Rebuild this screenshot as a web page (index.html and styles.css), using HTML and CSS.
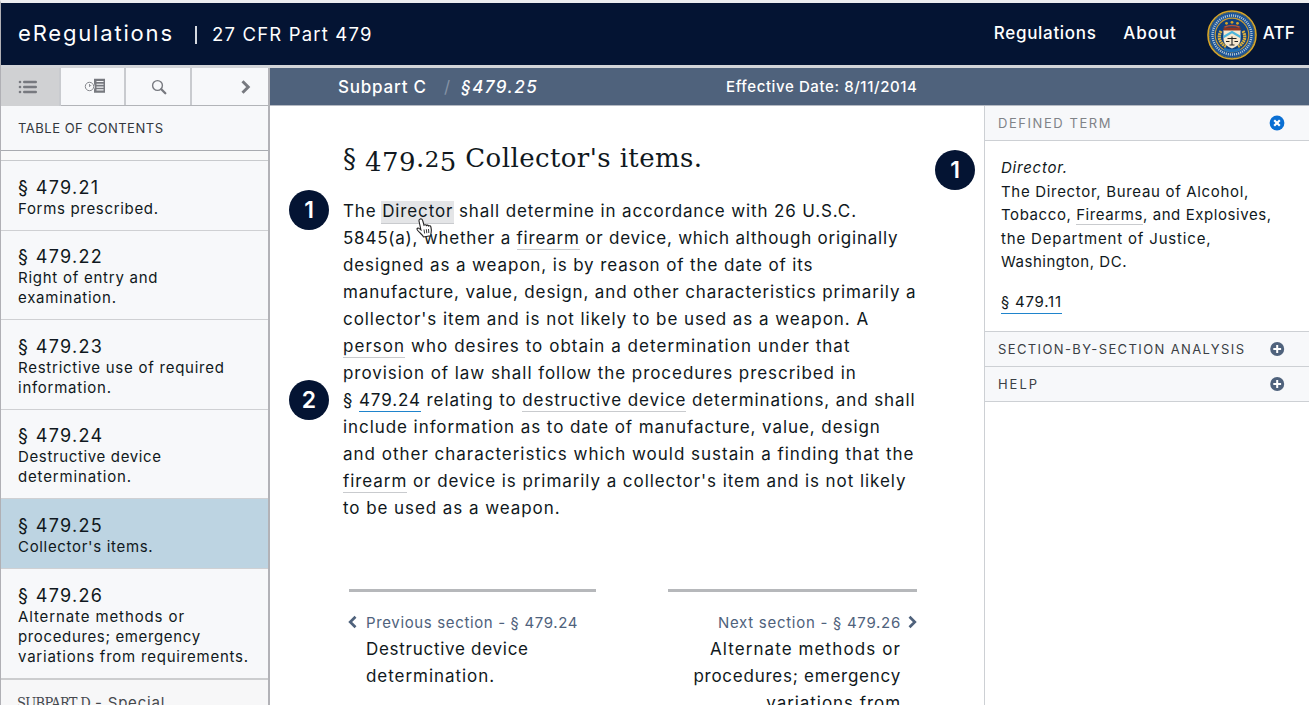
FILE: index.html
```html
<!DOCTYPE html>
<html lang="en">
<head>
<meta charset="utf-8">
<title>eRegulations | 27 CFR Part 479</title>
<link rel="stylesheet" href="styles.css">
</head>
<body>
<div class="page">
  <header class="site-header">
    <span class="brand">eRegulations</span>
    <span class="divider"></span>
    <span class="part">27 CFR Part 479</span>
    <nav class="site-nav">
      <a class="nav-regs">Regulations</a>
      <a class="nav-about">About</a>
      <svg class="seal" width="50" height="50" viewBox="0 0 50 50">
        <defs><path id="ring" d="M7.2 35 A20.4 20.4 0 1 1 42.8 35"/></defs>
        <circle cx="25" cy="25" r="24" fill="#16529a" stroke="#d8a526" stroke-width="1.6"/>
        <circle cx="25" cy="25" r="22.6" fill="none" stroke="#8b7432" stroke-width="1" stroke-dasharray="1 .8"/>
        <circle cx="25" cy="25" r="19.5" fill="none" stroke="#b3c4d0" stroke-width="2.4" stroke-dasharray="1.1 1"/>
        <circle cx="25" cy="25" r="16.8" fill="#11407c" stroke="#c79a35" stroke-width="1.2"/>
        <path d="M14 21c-3.500 6-1.500 12 5 15.500M36 21c3.500 6 1.500 12-5 15.500" fill="none" stroke="#e0b13c" stroke-width="3.200" stroke-dasharray="1.800 .6"/>
        <path d="M17 39q8 3.500 16 0" fill="none" stroke="#1e6fb8" stroke-width="3"/>
        <path d="M16.500 20h17v9c0 5-4 7.500-8.500 9.500-4.500-2-8.500-4.500-8.500-9.500z" fill="#f7e8cf"/>
        <path d="M16.500 17.500h17v3h-17z" fill="#8d3421"/>
        <path d="M17.500 17q7.500-3 15 0" fill="none" stroke="#b85232" stroke-width="1.500"/>
        <path d="M16.500 27l8.500-5 8.500 5" fill="none" stroke="#4cb5dc" stroke-width="2.200"/>
        <path d="M25 26.500v8.500M20.500 28.500h9M22.500 35h5M19 31.500h3.500M27.500 31.500h3.500" fill="none" stroke="#222" stroke-width="1.100"/>
        <g fill="#d8a526"><circle cx="19.500" cy="13.300" r="1.400"/><circle cx="25" cy="12.300" r="1.400"/><circle cx="30.500" cy="13.300" r="1.400"/></g>
      </svg>
      <a class="nav-atf">ATF</a>
    </nav>
  </header>

  <div class="toolbar">
    <div class="tabs">
      <div class="tab tab-toc"><svg width="20" height="16" viewBox="0 0 20 16"><g fill="#77797f"><circle cx="2" cy="3" r="1.300"/><circle cx="2" cy="8" r="1.300"/><circle cx="2" cy="13" r="1.300"/><rect x="5" y="1.700" width="14" height="2.600" rx="1.200"/><rect x="5" y="6.700" width="14" height="2.600" rx="1.200"/><rect x="5" y="11.700" width="14" height="2.600" rx="1.200"/></g></svg></div>
      <div class="tab tab-history"><svg width="22" height="16" viewBox="0 0 22 16"><circle cx="5.500" cy="8.500" r="4.200" fill="none" stroke="#85878c"/><path d="M5.500 6v2.700L7.200 7" fill="none" stroke="#85878c" stroke-width=".9"/><path d="M10 .8h11v14H10v-3.300q1.500-3 0-6z" fill="#77797f"/><path d="M12.500 3.500h7M12.500 6.300h7M12.500 9.100h7M12.500 11.900h7" stroke="#f4f5f7" stroke-width="1.100"/></svg></div>
      <div class="tab tab-search"><svg width="16" height="16" viewBox="0 0 16 16" fill="none" stroke="#77797f"><circle cx="6.500" cy="6.500" r="4.900" stroke-width="1.400"/><path d="M10.300 10.300l4 4" stroke-width="2.300" stroke-linecap="round"/></svg></div>
      <div class="tab tab-close"><svg width="12" height="16" viewBox="0 0 12 16" fill="none" stroke="#77797f" stroke-width="3"><path d="M2.500 2.300L8.200 8l-5.700 5.700"/></svg></div>
    </div>
    <div class="crumbs">
      <span class="crumb-part">Subpart C</span><span class="slash">/</span><em class="crumb-sec">§479.25</em>
      <span class="effective">Effective Date: 8/11/2014</span>
    </div>
  </div>

  <div class="columns">
    <aside class="toc">
      <h2 class="toc-title">TABLE OF CONTENTS</h2>
      <div class="toc-strip"></div>
      <ul class="toc-list">
        <li><b>§ 479.21</b><span class="s68">Forms prescribed.</span></li>
        <li><b>§ 479.22</b><span class="s75">Right of entry and<br>examination.</span></li>
        <li><b>§ 479.23</b><span class="s75">Restrictive use of required<br>information.</span></li>
        <li><b>§ 479.24</b><span class="s64">Destructive device</span><span class="s84">determination.</span></li>
        <li class="current"><b>§ 479.25</b><span class="s68">Collector's items.</span></li>
        <li class="last"><b>§ 479.26</b><span class="s88">Alternate methods or</span><span class="s64">procedures; emergency</span><span class="s78">variations from requirements.</span></li>
      </ul>
      <div class="toc-subpart"><span class="slab">SUBPART D</span> - Special</div>
    </aside>

    <main class="content">
      <h1 class="title">§ <span class="low">479</span>.<span class="small-num">2</span><span class="low">5</span> Collector's items.</h1>
      <div class="reg">
        <p class="line s86">The <a class="term active">Director</a> shall determine in accordance with 26 U.S.C.</p>
        <p class="line s78">5845(a), whether a <a class="term">firearm</a> or device, which although originally</p>
        <p class="line s88">designed as a weapon, is by reason of the date of its</p>
        <p class="line s86">manufacture, value, design, and other characteristics primarily a</p>
        <p class="line s95">collector's item and is not likely to be used as a weapon. A</p>
        <p class="line s104"><a class="term">person</a> who desires to obtain a determination under that</p>
        <p class="line s95">provision of law shall follow the procedures prescribed in</p>
        <p class="line s89">§ <a class="cite">479.24</a> relating to <a class="term">destructive device</a> determinations, and shall</p>
        <p class="line s93">include information as to date of manufacture, value, design</p>
        <p class="line s98">and other characteristics which would sustain a finding that the</p>
        <p class="line s93"><a class="term">firearm</a> or device is primarily a collector's item and is not likely</p>
        <p class="line s93">to be used as a weapon.</p>
      </div>
      <nav class="pager">
        <a class="prev">
          <svg width="10" height="14" viewBox="0 0 10 14" fill="none" stroke="#4f627c" stroke-width="2.700"><path d="M7.500 1.700L2.200 7l5.300 5.300"/></svg>
          <span class="pager-label s64">Previous section - § 479.24</span>
          <span class="line s72">Destructive device</span>
          <span class="line s95">determination.</span>
        </a>
        <a class="next">
          <svg width="10" height="14" viewBox="0 0 10 14" fill="none" stroke="#4f627c" stroke-width="2.700"><path d="M2.500 1.700L7.800 7l-5.300 5.300"/></svg>
          <span class="pager-label s72">Next section - § 479.26</span>
          <span class="line s110">Alternate methods or</span>
          <span class="line s75">procedures; emergency</span>
          <span class="line s95">variations from</span>
        </a>
      </nav>
    </main>

    <aside class="panel">
      <h3 class="panel-head first"><span class="defined">DEFINED TERM</span>
        <svg width="16" height="16" viewBox="0 0 16 16"><circle cx="8" cy="8" r="7.400" fill="#0a6fd3"/><path d="M5.200 5.200l5.600 5.600M10.800 5.200l-5.600 5.600" stroke="#fff" stroke-width="2.200"/></svg></h3>
      <div class="definition">
        <p class="s76"><em>Director.</em></p>
        <p class="s68">The Director, Bureau of Alcohol,</p>
        <p class="s58">Tobacco, <a class="term">Firearms</a>, and Explosives,</p>
        <p class="s82">the Department of Justice,</p>
        <p class="s52">Washington, DC.</p>
        <p class="source s76"><a class="cite">§ 479.11</a></p>
      </div>
      <h3 class="panel-head"><span class="analysis">SECTION-BY-SECTION ANALYSIS</span>
        <svg width="16" height="16" viewBox="0 0 16 16"><circle cx="8.200" cy="8" r="7" fill="#4f627c"/><path d="M4.300 8h7.800M8.200 4.100v7.800" stroke="#fff" stroke-width="2"/></svg></h3>
      <h3 class="panel-head"><span class="help">HELP</span>
        <svg width="16" height="16" viewBox="0 0 16 16"><circle cx="8.200" cy="8" r="7" fill="#4f627c"/><path d="M4.300 8h7.800M8.200 4.100v7.800" stroke="#fff" stroke-width="2"/></svg></h3>
    </aside>
  </div>

  <span class="badge badge-term">1</span>
  <span class="badge badge-cite">2</span>
  <span class="badge badge-panel">1</span>
  <svg class="pointer" width="18" height="20" viewBox="0 0 18 20"><path d="M4.200 1C5.500.6 6.300 1.300 6.700 2.600L8 7.200c.8-.8 2-.6 2.400.3.800-.7 1.900-.4 2.200.5.900-.6 2-.1 2.300 1 .5 2 .9 4 .2 6l-.6 2.800-7 1.200c-.6-1.700-2.300-3-4-4.600C2 13 1 12 .9 11c.1-1.100 1.600-1.200 2.500-.4l1.500 1.200L3 3C2.800 2 3.300 1.200 4.200 1z" fill="#fff" stroke="#222" stroke-width="1.100"/><path d="M8 11.500l.6 4M10.300 11.200l.5 4M12.500 11l.3 4" stroke="#222" stroke-width=".9"/></svg>
</div>
</body>
</html>
```

FILE: styles.css
```css
* { box-sizing: border-box; }
body { margin: 0; background: #fff; color: #101820; font-family: Inter, "Liberation Sans", sans-serif; }
h1, h2, h3, p, ul { margin: 0; padding: 0; font-weight: 400; }
ul { list-style: none; }
svg { display: block; flex: none; }

.page { position: relative; width: 1309px; height: 705px; overflow: hidden; border-top: 3px solid #ecedef; border-left: 1px solid #b0b0b5; }

.site-header { display: flex; align-items: center; height: 65px; padding: 0 14px 3px 17px; background: #041433; border-bottom: 3px solid #d2d4d8; color: #fff; }
.brand { width: 176px; font-size: 22px; letter-spacing: 1.82px; line-height: 28px; }
.divider { width: 2px; height: 18px; margin: 4px 15px 0 1px; background: #d5d9e0; }
.part { font-size: 18.500px; letter-spacing: 1.18px; line-height: 28px; padding-top: 2px; }
.site-nav { display: flex; align-items: center; margin-left: auto; font-size: 17px; font-weight: 500; line-height: 26px; }
.nav-regs { width: 129.500px; letter-spacing: .68px; }
.nav-about { width: 83.500px; letter-spacing: .91px; }
.seal { margin: 4px 6px 0 0; }
.nav-atf { letter-spacing: .15px; }

.toolbar { display: flex; height: 38px; }
.tabs { display: flex; width: 269px; background: #f7f8fa; border-right: 2px solid #b2b2b7; border-bottom: 1px solid #b2b4b8; }
.tab { display: flex; align-items: center; justify-content: center; height: 37px; border-right: 2px solid #c9cbcf; }
.tab-toc { width: 60px; height: 38px; background: #d0d1d3; padding-right: 4px; }
.tab-history { width: 65px; padding-left: 4px; padding-bottom: 2px; }
.tab-search { width: 66px; padding-left: 2px; }
.tab-close { width: 76px; border: 0; justify-content: flex-end; padding-right: 16px; }
.crumbs { display: flex; align-items: center; flex: 1; padding-left: 68px; background: #4f627c; border-bottom: 1px solid #b5bac3; color: #fff; font-size: 17px; font-weight: 500; }
.crumb-part { width: 106px; letter-spacing: .79px; }
.slash { width: 17px; font-weight: 400; color: #8592a5; }
.crumb-sec { width: 265px; letter-spacing: 1.5px; }
.effective { font-size: 15px; letter-spacing: .6px; }

.columns { display: flex; height: 599px; }

.toc { width: 269px; background: #f7f8fa; border-right: 2px solid #b2b2b7; }
.toc-title { height: 45px; padding-left: 17px; border-bottom: 1px solid #a9abb0; font-size: 13px; letter-spacing: .51px; line-height: 45px; color: #33373d; }
.toc-strip { height: 10px; background: #f9f9f9; border-bottom: 1px solid #c8cacd; }
.toc-list li { padding: 15.600px 0 11px 17px; border-bottom: 1px solid #cfd0d3; font-size: 15px; line-height: 20px; }
.toc-list b { display: block; font-size: 18px; font-weight: 400; line-height: 22px; letter-spacing: 1.33px; }
.toc-list span { display: block; }
.toc-list .current { background: #bdd4e2; }
.toc-list .last { border-bottom: 2px solid #cccdcf; }
.toc-subpart { height: 30px; padding: 13px 0 0 16px; background: #f7f7f8; font-size: 15px; line-height: 20px; letter-spacing: .8px; color: #45484d; }
.slab { font-family: "DejaVu Serif Condensed", "DejaVu Serif", serif; font-size: 14.500px; letter-spacing: -.7px; }

.content { width: 714px; padding: 35px 0 0 73px; }
.title { height: 57.400px; font: 400 26px/34px "DejaVu Serif", serif; letter-spacing: .41px; white-space: pre; }
.low { position: relative; top: 4px; }
.small-num { font-size: 23px; }
.reg { height: 391px; white-space: nowrap; }
.line { display: block; font-size: 17px; line-height: 26.930px; white-space: nowrap; }
.term { border-bottom: 1px solid #c9cbce; padding-bottom: 1px; }
.term.active { background: #e4e5e7; margin: 0 -1px; padding: 0 1px 2px; }
.cite { border-bottom: 1.500px solid #1f84cc; padding-bottom: 1px; }

.pager { display: flex; justify-content: space-between; width: 568px; margin-left: 6px; }
.prev, .next { position: relative; height: 140px; border-top: 3px solid #b6b8bb; padding-top: 17px; }
.prev { width: 247px; padding-left: 17px; }
.next { width: 249px; padding-right: 16px; text-align: right; }
.prev svg { position: absolute; left: -1px; top: 23px; }
.next svg { position: absolute; right: 0; top: 23px; }
.pager-label { display: block; font-size: 15px; line-height: 27px; color: #4f627c; }

.panel { flex: 1; border-left: 1px solid #cdd0d4; }
.panel-head { display: flex; align-items: center; justify-content: space-between; height: 35px; padding: 0 24px 0 13px; background: #f7f8fa; border-bottom: 1px solid #cdd0d4; font-size: 13px; line-height: 20px; color: #3b3f45; }
.panel-head.first { color: #808388; }
.defined { letter-spacing: 1.56px; }
.analysis { letter-spacing: 1.38px; }
.help { letter-spacing: 1.95px; }
.definition { height: 191px; padding: 15px 0 0 16px; border-bottom: 1px solid #cdd0d4; font-size: 15px; line-height: 23.600px; white-space: nowrap; }
.definition .source { margin-top: 16px; }
.definition .cite { padding-bottom: 2px; border-bottom-width: 1px; }
.definition .term { padding-bottom: 0; }

.s52 { letter-spacing: .52px; }
.s58 { letter-spacing: .58px; }
.s64 { letter-spacing: .64px; }
.s68 { letter-spacing: .68px; }
.s72 { letter-spacing: .72px; }
.s75 { letter-spacing: .75px; }
.s76 { letter-spacing: .76px; }
.s78 { letter-spacing: .78px; }
.s82 { letter-spacing: .82px; }
.s84 { letter-spacing: .84px; }
.s86 { letter-spacing: .87px; }
.s88 { letter-spacing: .885px; }
.s89 { letter-spacing: .895px; }
.s93 { letter-spacing: .933px; }
.s95 { letter-spacing: .95px; }
.s98 { letter-spacing: .986px; }
.s104 { letter-spacing: 1.043px; }
.s110 { letter-spacing: 1.1px; }

.badge { position: absolute; width: 40px; height: 40px; border-radius: 50%; background: #041433; color: #fff; font-size: 23px; font-weight: 600; line-height: 40px; text-align: center; }
.badge-term { left: 288px; top: 187px; }
.badge-cite { left: 288px; top: 377px; }
.badge-panel { left: 934px; top: 147px; }
.pointer { position: absolute; left: 415px; top: 215px; }
```
